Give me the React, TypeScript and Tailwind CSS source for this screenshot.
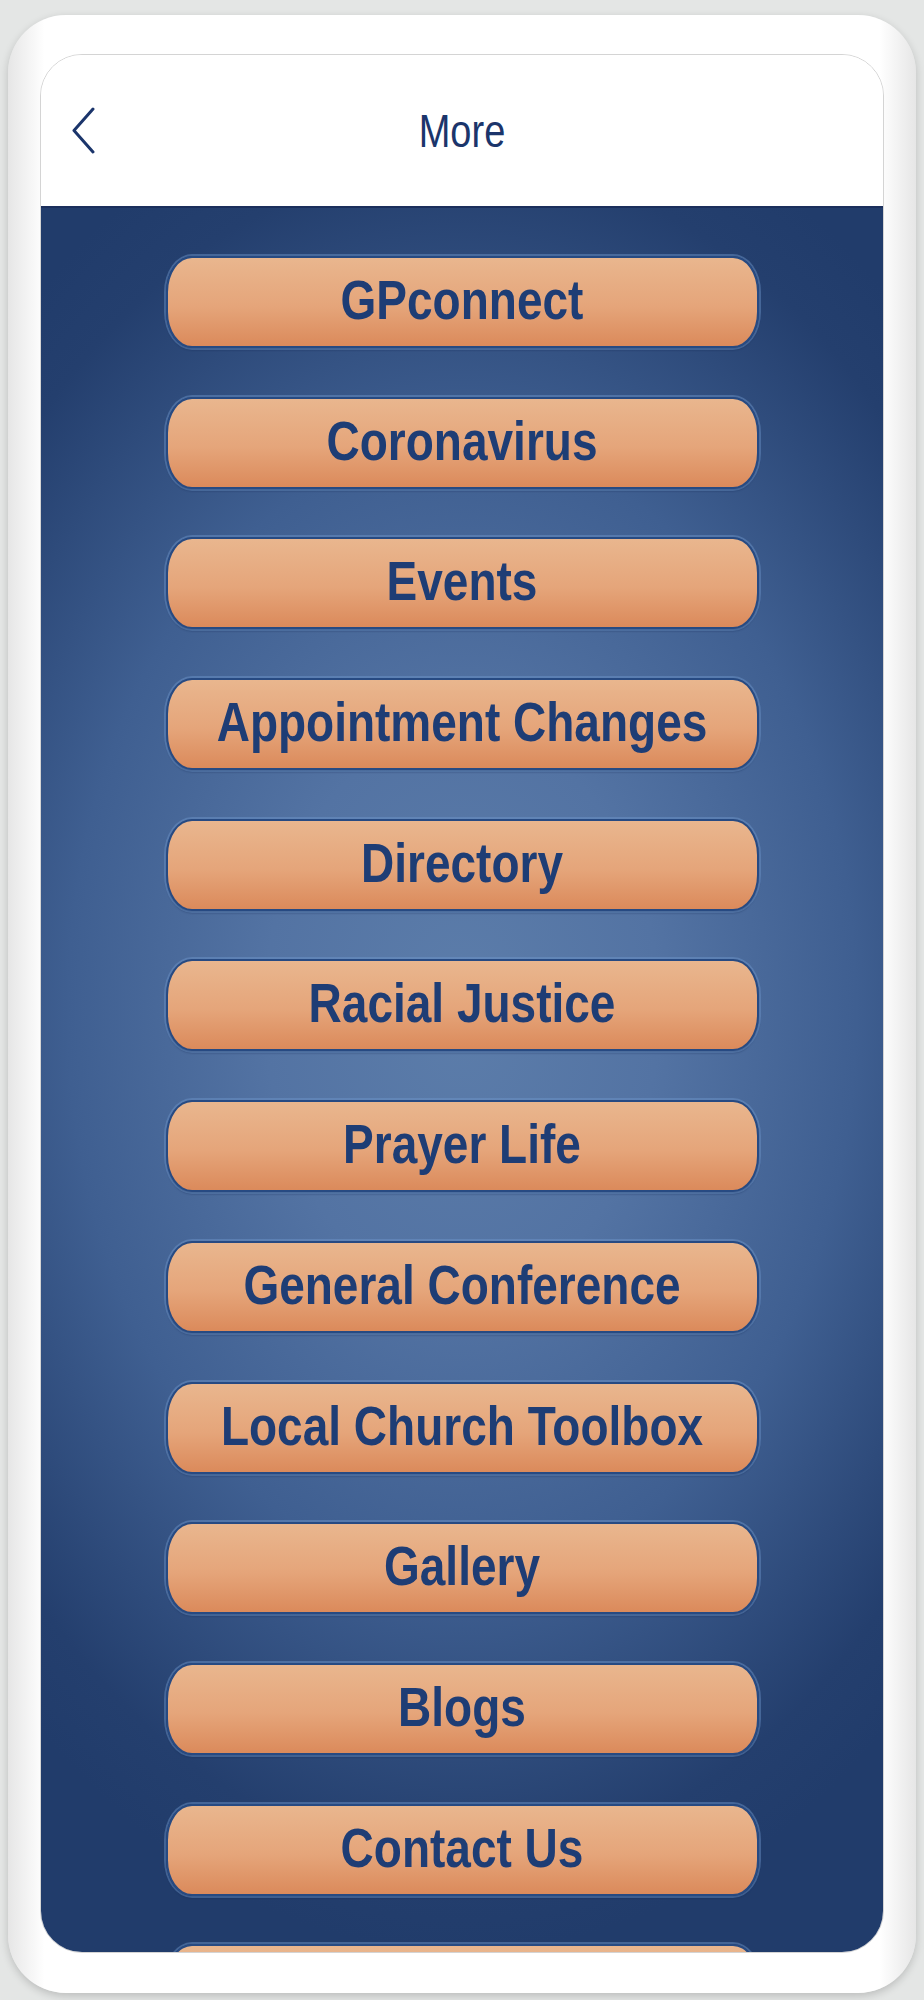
import React from 'react';

const items = [
  'GPconnect',
  'Coronavirus',
  'Events',
  'Appointment Changes',
  'Directory',
  'Racial Justice',
  'Prayer Life',
  'General Conference',
  'Local Church Toolbox',
  'Gallery',
  'Blogs',
  'Contact Us',
  '',
];

export default function App() {
  return (
    <div className="min-h-[2000px] bg-[#e4e6e5] px-2 pt-[15px] font-['Liberation_Sans',Arial,sans-serif]">
      <div className="h-[1978px] rounded-[58px] bg-[linear-gradient(to_right,#e6e6e6,#ffffff_4%,#ffffff_96%,#e6e6e6)] px-8 pt-[39px] pb-10 shadow-[0_3px_8px_rgba(0,0,0,0.18)]">
        <div className="flex h-full flex-col overflow-hidden rounded-[42px] border border-[#d4d4d4]">
          {/* Header */}
          <div className="grid h-[153px] shrink-0 grid-cols-[1fr_auto_1fr] items-center border-b-2 border-[#1b2f5c] bg-white">
            <div className="pl-[31px]">
              <svg width="24" height="47" viewBox="0 0 24 47" fill="none">
                <polyline
                  points="21,2 2,23.5 21,45"
                  stroke="#1b356b"
                  strokeWidth="3"
                  strokeLinecap="round"
                  strokeLinejoin="round"
                />
              </svg>
            </div>
            <span className="inline-block scale-y-[1.2] text-[38px] leading-none text-[#1b356b]">More</span>
            <div />
          </div>

          {/* Menu */}
          <div className="flex flex-1 flex-col items-center gap-[48.7px] overflow-hidden bg-[radial-gradient(ellipse_78%_54%_at_50%_46%,#5c7daa_0%,#5373a3_30%,#3f5f91_60%,#243f6e_90%,#213c6b_100%)] pt-[48px]">
            {items.map((label, i) => (
              <div
                key={i}
                className="flex h-[92px] w-[593px] shrink-0 items-center justify-center rounded-[26px_/_36px] border-2 border-[#274a82] bg-[linear-gradient(to_bottom,#e9b68e,#e5a57a_55%,#db8a5b)] pb-1 shadow-[0_0_0_2px_rgba(110,150,205,0.45),0_2px_2px_rgba(10,30,70,0.5)]"
              >
                {label && (
                  <span className="inline-block scale-y-[1.2] text-[46px] font-bold leading-none text-[#1e3d75]">
                    {label}
                  </span>
                )}
              </div>
            ))}
          </div>
        </div>
      </div>
    </div>
  );
}
